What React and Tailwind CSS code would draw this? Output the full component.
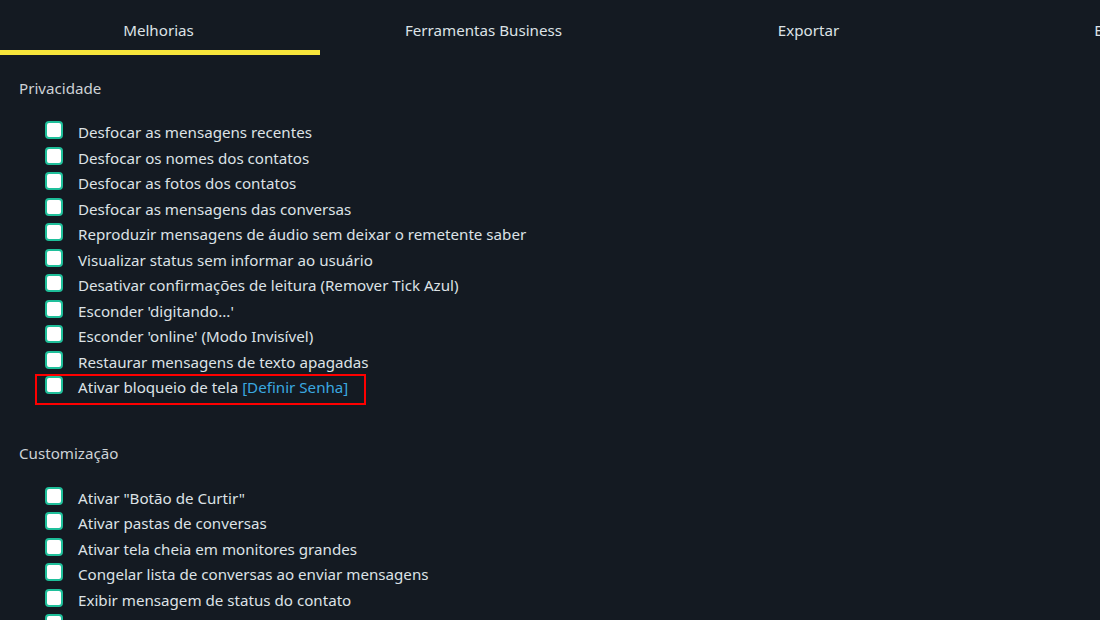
const privacy = [
  'Desfocar as mensagens recentes',
  'Desfocar os nomes dos contatos',
  'Desfocar as fotos dos contatos',
  'Desfocar as mensagens das conversas',
  'Reproduzir mensagens de áudio sem deixar o remetente saber',
  'Visualizar status sem informar ao usuário',
  'Desativar confirmações de leitura (Remover Tick Azul)',
  "Esconder 'digitando...'",
  "Esconder 'online' (Modo Invisível)",
  'Restaurar mensagens de texto apagadas',
];

const custom = [
  'Ativar "Botão de Curtir"',
  'Ativar pastas de conversas',
  'Ativar tela cheia em monitores grandes',
  'Congelar lista de conversas ao enviar mensagens',
  'Exibir mensagem de status do contato',
  'Mostrar botões de ações rápidas',
];

const tabs = ['Melhorias', 'Ferramentas Business', 'Exportar', 'Estatísticas'];

function Box() {
  return (
    <span className="mt-[2px] ml-[45px] mr-[15px] h-[18px] w-[18px] shrink-0 rounded-[4px] border-2 border-[#1fbf9a] bg-white" />
  );
}

function Row({ children }) {
  return (
    <label className="flex h-[25.5px] items-start">
      <Box />
      <span className="pt-[1px] leading-[25px]">{children}</span>
    </label>
  );
}

export default function App() {
  return (
    <div
      className="h-[620px] w-[1100px] overflow-hidden bg-[#141a22] text-[15.15px] text-[#dde2e6]"
      style={{ fontFamily: '"Noto Sans", "Open Sans", sans-serif' }}
    >
      <div className="flex h-[55px] whitespace-nowrap">
        {tabs.map((t, i) => (
          <div key={t} className="relative w-[325px] shrink-0">
            <div className="pr-[8px] pt-[19px] text-center leading-[22px]">{t}</div>
            {i === 0 && <div className="absolute bottom-0 left-0 h-[5px] w-[320px] bg-[#f7e53b]" />}
          </div>
        ))}
      </div>

      <div className="pl-[19px] pt-[22px] leading-[22px] text-[#cdd2d6]">Privacidade</div>
      <div className="mt-[20px]">
        {privacy.map((p) => (
          <Row key={p}>{p}</Row>
        ))}
        <div className="relative">
          <Row>
            Ativar bloqueio de tela <span className="text-[#3aa8e0]">[Definir Senha]</span>
          </Row>
          <div className="pointer-events-none absolute left-[35px] top-[0px] h-[31px] w-[331px] border-2 border-[#ff0000]" />
        </div>
      </div>

      <div className="pl-[19px] pt-[42px] leading-[22px] text-[#cdd2d6]">Customização</div>
      <div className="mt-[21px]">
        {custom.map((p) => (
          <Row key={p}>{p}</Row>
        ))}
      </div>
    </div>
  );
}
